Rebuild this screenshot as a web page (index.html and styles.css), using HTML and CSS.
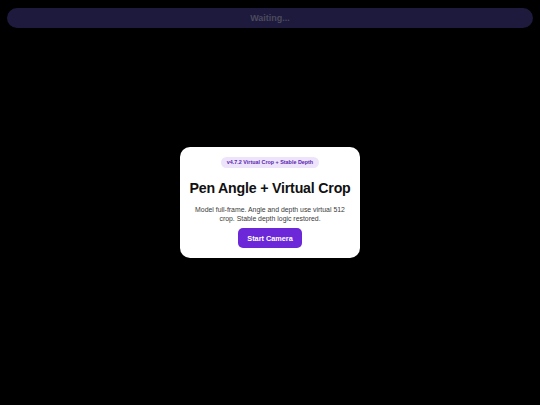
FILE: index.html
```html
<!DOCTYPE html>
<html>
<head>
<meta charset="utf-8">
<link rel="stylesheet" href="styles.css">
</head>
<body>
<div class="page">
  <div class="status">Waiting...</div>
  <div class="center">
    <div class="card">
      <div class="badge">v4.7.2 Virtual Crop + Stable Depth</div>
      <h1 class="title">Pen Angle + Virtual Crop</h1>
      <p class="desc">Model full-frame. Angle and depth use virtual 512 crop. Stable depth logic restored.</p>
      <button class="btn">Start Camera</button>
    </div>
  </div>
</div>
</body>
</html>
```
FILE: styles.css
```css
html, body {
  margin: 0;
  padding: 0;
  background: #000;
  width: 540px;
  height: 405px;
  overflow: hidden;
  font-family: "Liberation Sans", Arial, sans-serif;
}
.page {
  display: flex;
  flex-direction: column;
  height: 405px;
  padding: 8px 7px 0 7px;
  box-sizing: border-box;
}
.status {
  height: 20px;
  border-radius: 10px;
  background: #1d1a3d;
  color: #4b4a5c;
  font-size: 9px;
  font-weight: bold;
  display: flex;
  align-items: center;
  justify-content: center;
}
.center {
  flex: 1;
  display: flex;
  align-items: flex-start;
  justify-content: center;
  padding-top: 119px;
}
.card {
  width: 180px;
  box-sizing: border-box;
  background: #fff;
  border-radius: 10px;
  padding: 10px 12px 10px;
  display: flex;
  flex-direction: column;
  align-items: center;
  text-align: center;
}
.badge {
  background: #ede4fc;
  color: #5b24b0;
  font-size: 5.4px;
  font-weight: bold;
  border-radius: 6px;
  padding: 2px 6px;
  line-height: 7px;
}
.title {
  margin: 11px 0 0;
  font-size: 14.2px;
  letter-spacing: -0.2px;
  line-height: 18px;
  font-weight: bold;
  color: #111;
  white-space: nowrap;
}
.desc {
  margin: 9px 0 0;
  font-size: 6.9px;
  line-height: 8.5px;
  color: #3a3a3a;
  width: 156px;
}
.btn {
  margin-top: 5px;
  background: #6b27d8;
  color: #fff;
  border: none;
  border-radius: 5px;
  width: 64px;
  height: 20px;
  font-family: "Liberation Sans", Arial, sans-serif;
  font-size: 7.3px;
  font-weight: bold;
  padding: 0;
}
```
